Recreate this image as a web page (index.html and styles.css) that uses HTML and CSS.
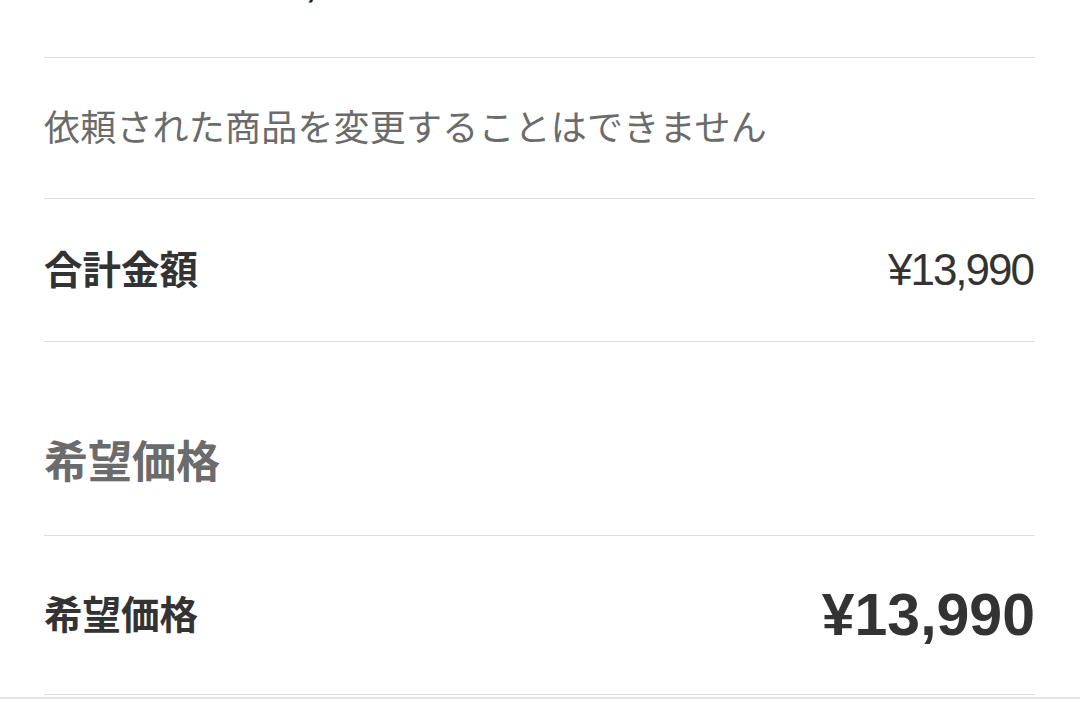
FILE: index.html
```html
<!DOCTYPE html>
<html lang="ja">
<head>
    <meta charset="UTF-8">
    <meta name="viewport" content="width=device-width, initial-scale=1.0">
    <title>希望価格</title>
    <link rel="stylesheet" href="styles.css">
</head>
<body>
    <div class="list">
        <div class="row row-top">
            <span class="top-text">¥7,000</span>
        </div>
        <div class="row row-note">
            <span class="note">依頼された商品を変更することはできません</span>
        </div>
        <div class="row row-total">
            <span class="label">合計金額</span>
            <span class="amount">¥13,990</span>
        </div>
        <div class="row section-head">
            <h2 class="section-title">希望価格</h2>
        </div>
        <div class="row row-wish">
            <span class="label">希望価格</span>
            <span class="amount amount-big">¥13,990</span>
        </div>
    </div>
    <div class="bottom-line"></div>
</body>
</html>
```

FILE: styles.css
```css
body {
    margin: 0;
    background: #fff;
    font-family: "Liberation Sans", "Noto Sans CJK JP", sans-serif;
    color: #333;
}
.list {
    padding: 0 45px 0 44px;
}
.row {
    display: flex;
    align-items: center;
    justify-content: space-between;
    border-bottom: 1px solid #dcdcdc;
    padding-right: 2px;
}
.row-top {
    height: 57px;
    align-items: flex-start;
    overflow: hidden;
}
.top-text {
    margin-top: -37px;
    margin-left: 222px;
    font-size: 36px;
    line-height: 44px;
    font-weight: bold;
    color: #222;
}
.row-note {
    height: 140px;
}
.note {
    margin-bottom: 6px;
    font-family: "Noto Sans CJK JP", sans-serif;
    font-size: 36px;
    color: #6b6b6b;
    letter-spacing: 0.2px;
}
.row-total {
    height: 142px;
}
.label {
    margin-bottom: 6px;
    font-family: "Noto Sans CJK JP", sans-serif;
    font-size: 38.5px;
    font-weight: bold;
    color: #333;
}
.amount {
    font-size: 44px;
    letter-spacing: -2px;
    color: #333;
}
.section-head {
    height: 153px;
    padding-top: 40px;
}
.section-title {
    margin: 0;
    font-family: "Noto Sans CJK JP", sans-serif;
    font-size: 44px;
    font-weight: bold;
    color: #6b6b6b;
}
.row-wish {
    height: 158px;
}
.amount-big {
    margin-right: -2px;
    font-size: 59px;
    font-weight: bold;
    letter-spacing: 0;
}
.bottom-line {
    margin-top: 2px;
    height: 2px;
    background: #e3e3e3;
}
```
